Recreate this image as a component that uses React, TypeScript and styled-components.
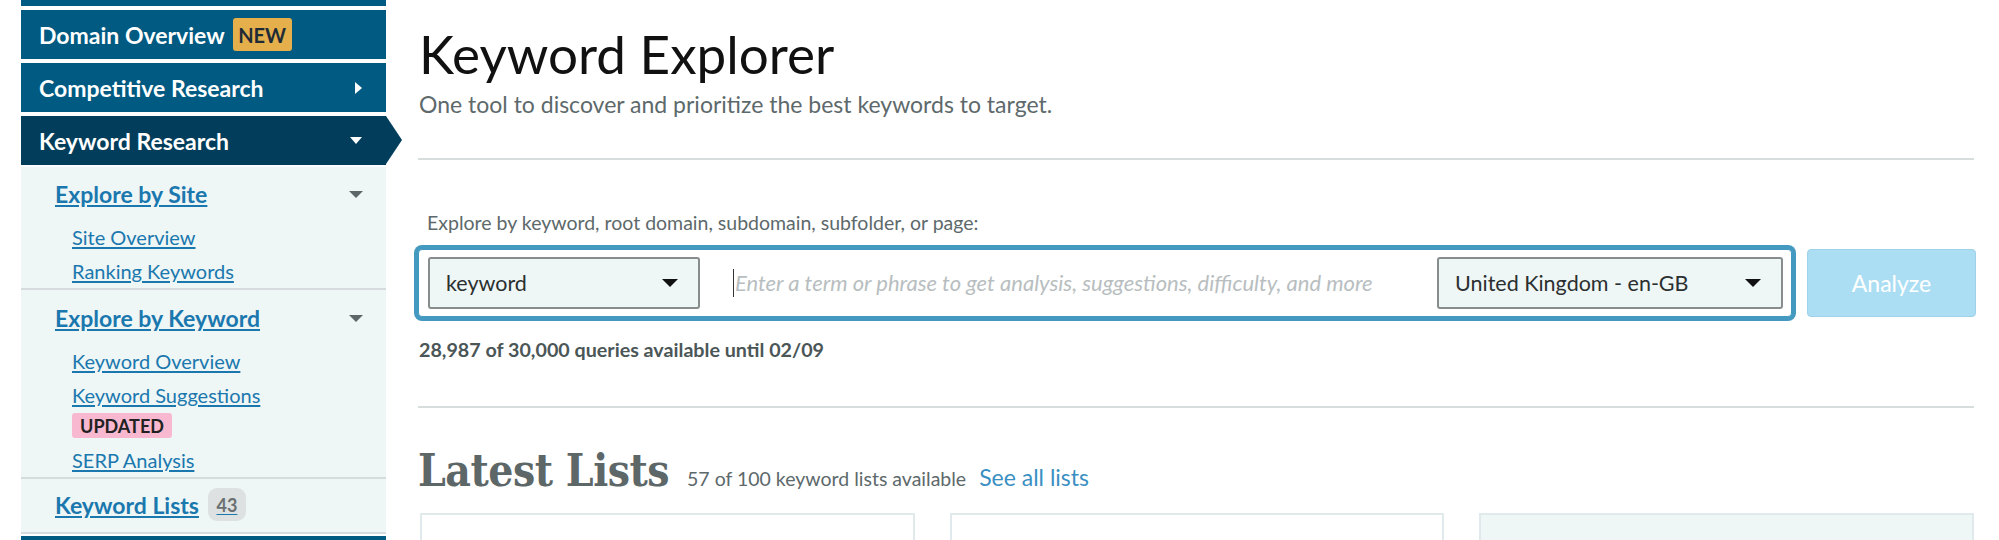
import styled, { createGlobalStyle, css } from "styled-components";

const GlobalStyle = createGlobalStyle`
  html, body {
    margin: 0;
    padding: 0;
    background: #ffffff;
  }
  body {
    font-family: Lato, "Open Sans", sans-serif;
    -webkit-font-smoothing: antialiased;
  }
  #root {
    height: 540px;
    overflow: hidden;
  }
`;

const Page = styled.div`
  display: flex;
  align-items: flex-start;
  gap: 32px;
  padding: 0 23px 0 21px;
`;

/* ---------- sidebar ---------- */

const Sidebar = styled.nav`
  width: 365px;
  flex-shrink: 0;
  display: flex;
  flex-direction: column;
`;

const NavItem = styled.div<{ $active?: boolean; $stub?: boolean }>`
  position: relative;
  box-sizing: border-box;
  height: ${(p) => (p.$stub ? "6px" : "49px")};
  margin-bottom: 4px;
  padding: 0 24px 0 18px;
  display: flex;
  align-items: center;
  justify-content: space-between;
  background: ${(p) => (p.$active ? "#023e5b" : "#005a81")};
  color: #ffffff;
  font-size: 23px;
  font-weight: 700;

  ${(p) =>
    p.$active &&
    css`
      margin-bottom: 2px;
      &::after {
        content: "";
        position: absolute;
        top: 0;
        right: -16px;
        border-left: 16px solid #023e5b;
        border-top: 24.5px solid transparent;
        border-bottom: 24.5px solid transparent;
      }
    `}
`;

const NavLabel = styled.span`
  display: flex;
  align-items: center;
  gap: 8px;
`;

const Caret = styled.span<{ $dir: "right" | "down"; $color: string; $size?: number }>`
  width: 0;
  height: 0;
  flex-shrink: 0;
  ${(p) =>
    p.$dir === "right"
      ? css`
          border-left: 7px solid ${p.$color};
          border-top: 6px solid transparent;
          border-bottom: 6px solid transparent;
        `
      : css`
          border-top: ${(p.$size ?? 14) * 0.55}px solid ${p.$color};
          border-left: ${(p.$size ?? 14) / 2}px solid transparent;
          border-right: ${(p.$size ?? 14) / 2}px solid transparent;
        `}
`;

const Badge = styled.span<{ $tone: "new" | "updated" | "count" }>`
  display: inline-flex;
  align-items: center;
  justify-content: center;
  box-sizing: border-box;
  font-weight: 700;
  ${(p) =>
    p.$tone === "new" &&
    css`
      height: 33px;
      width: 59px;
      background: #e5b04b;
      color: #1f2c37;
      font-size: 20px;
      border-radius: 3px;
    `}
  ${(p) =>
    p.$tone === "updated" &&
    css`
      height: 25px;
      width: 100px;
      background: #f8b9d0;
      color: #222222;
      font-size: 18px;
      border-radius: 3px;
    `}
  ${(p) =>
    p.$tone === "count" &&
    css`
      height: 33px;
      width: 38px;
      background: #dde1e1;
      color: #6a7071;
      font-size: 18px;
      border-radius: 9px;
      text-decoration: none;
    `}
`;

const SubPanel = styled.div`
  background: #eef6f6;
  margin-bottom: 2px;
`;

const Group = styled.div<{ $pad?: string }>`
  padding: ${(p) => p.$pad ?? "13px 23px 0 34px"};
  border-bottom: 2px solid #d6dcdd;
`;

const GroupHead = styled.div`
  display: flex;
  align-items: center;
  justify-content: space-between;
  height: 28px;
`;

const GroupLink = styled.a`
  display: inline-flex;
  align-items: center;
  gap: 9px;
  color: #1a78ae;
  font-size: 23px;
  font-weight: 700;
  text-decoration: underline;
  text-underline-offset: 2px;
`;

const SubList = styled.div`
  display: flex;
  flex-direction: column;
  align-items: flex-start;
  margin-top: 12px;
  padding-left: 17px;
`;

const SubLink = styled.a`
  display: block;
  height: 34px;
  line-height: 34px;
  color: #1a78ae;
  font-size: 20px;
  text-decoration: underline;
  text-underline-offset: 2px;
`;

const BadgeSlot = styled.div`
  margin: 1px 0 5px;
`;

/* ---------- main ---------- */

const Main = styled.main`
  flex: 1;
  min-width: 0;
  display: flex;
  flex-direction: column;
`;

const Title = styled.h1`
  margin: 22px 0 0;
  font-size: 53px;
  font-weight: 400;
  line-height: 1.2;
  color: #111111;
  padding-left: 1px;
`;

const Subtitle = styled.p`
  margin: 5px 0 0;
  font-size: 23px;
  line-height: 1.2;
  color: #5d696b;
  padding-left: 1px;
`;

const Rule = styled.hr<{ $top: number }>`
  margin: ${(p) => p.$top}px 2px 0 0;
  border: none;
  border-top: 2px solid #d7dcdd;
`;

const FieldLabel = styled.label`
  margin: 51px 0 0 9px;
  font-size: 19.5px;
  line-height: 1.2;
  color: #5d696b;
`;

const SearchRow = styled.div`
  display: flex;
  align-items: center;
  gap: 15px;
  margin-top: 14px;
`;

const SearchBox = styled.div`
  flex: 1;
  box-sizing: border-box;
  height: 68px;
  display: flex;
  align-items: center;
  padding: 0 8px 0 9px;
  border: 1px solid #4399c0;
  border-radius: 4px;
  box-shadow: 0 0 0 4px #4399c0;
  background: #ffffff;
`;

const Select = styled.div<{ $width: number }>`
  box-sizing: border-box;
  width: ${(p) => p.$width}px;
  height: 52px;
  flex-shrink: 0;
  display: flex;
  align-items: center;
  justify-content: space-between;
  padding: 0 20px 0 16px;
  background: #eef6f6;
  border: 2px solid #878c8d;
  border-radius: 3px;
  color: #2b2f30;
  font-size: 21.5px;
`;

const InputWrap = styled.div`
  flex: 1;
  display: flex;
  align-items: center;
  padding-left: 33px;
`;

const Cursor = styled.span`
  width: 1px;
  height: 28px;
  background: #333333;
`;

const QueryInput = styled.input`
  flex: 1;
  border: none;
  outline: none;
  background: transparent;
  padding: 0 0 0 1px;
  font-family: Lato, sans-serif;
  font-size: 22px;
  font-style: italic;
  color: #333333;
  &::placeholder {
    color: #b8bec0;
    font-style: italic;
  }
`;

const AnalyzeButton = styled.button`
  box-sizing: border-box;
  width: 169px;
  height: 68px;
  flex-shrink: 0;
  background: #acdef3;
  border: 1px solid #9ed1ea;
  border-radius: 4px;
  color: #ffffff;
  font-family: Lato, sans-serif;
  font-size: 23px;
`;

const Quota = styled.div`
  margin: 21px 0 0 1px;
  font-size: 19.7px;
  font-weight: 700;
  line-height: 1.2;
  color: #4b5657;
`;

const ListsHeader = styled.div`
  display: flex;
  align-items: baseline;
  margin-top: 37px;
`;

const ListsTitle = styled.h2`
  margin: 0 18px 0 0;
  font-family: "DejaVu Serif Condensed", "DejaVu Serif", serif;
  font-stretch: condensed;
  font-size: 44px;
  font-weight: 700;
  letter-spacing: -0.5px;
  line-height: 1.2;
  color: #5d6768;
`;

const ListsMeta = styled.span`
  font-size: 19.5px;
  color: #5d696b;
  margin-right: 13px;
`;

const ListsLink = styled.a`
  font-size: 23px;
  color: #3a8fc2;
  text-decoration: none;
`;

const CardGrid = styled.div`
  display: grid;
  grid-template-columns: repeat(3, 1fr);
  gap: 35px;
  margin: 15px 2px 0 2px;
`;

const Card = styled.div<{ $tinted?: boolean }>`
  height: 90px;
  border: 2px solid #e0eaec;
  background: ${(p) => (p.$tinted ? "#eef6f6" : "#ffffff")};
`;

const App = () => {
  return (
    <>
      <GlobalStyle />
      <Page>
        <Sidebar>
          <NavItem $stub />
          <NavItem>
            <NavLabel>
              Domain Overview <Badge $tone="new">NEW</Badge>
            </NavLabel>
          </NavItem>
          <NavItem>
            <NavLabel>Competitive Research</NavLabel>
            <Caret $dir="right" $color="#ffffff" />
          </NavItem>
          <NavItem $active>
            <NavLabel>Keyword Research</NavLabel>
            <Caret $dir="down" $color="#ffffff" $size={13} />
          </NavItem>

          <SubPanel>
            <Group>
              <GroupHead>
                <GroupLink href="#">Explore by Site</GroupLink>
                <Caret $dir="down" $color="#5d6768" />
              </GroupHead>
              <SubList>
                <SubLink href="#">Site Overview</SubLink>
                <SubLink href="#">Ranking Keywords</SubLink>
              </SubList>
            </Group>
            <Group $pad="14px 23px 0 34px">
              <GroupHead>
                <GroupLink href="#">Explore by Keyword</GroupLink>
                <Caret $dir="down" $color="#5d6768" />
              </GroupHead>
              <SubList>
                <SubLink href="#">Keyword Overview</SubLink>
                <SubLink href="#">Keyword Suggestions</SubLink>
                <BadgeSlot>
                  <Badge $tone="updated">UPDATED</Badge>
                </BadgeSlot>
                <SubLink href="#">SERP Analysis</SubLink>
              </SubList>
            </Group>
            <Group $pad="9px 23px 11px 34px">
              <GroupLink href="#">
                Keyword Lists <Badge $tone="count">43</Badge>
              </GroupLink>
            </Group>
          </SubPanel>
          <NavItem />
        </Sidebar>

        <Main>
          <Title>Keyword Explorer</Title>
          <Subtitle>One tool to discover and prioritize the best keywords to target.</Subtitle>
          <Rule $top={40} />

          <FieldLabel htmlFor="kw-query">
            Explore by keyword, root domain, subdomain, subfolder, or page:
          </FieldLabel>
          <SearchRow>
            <SearchBox>
              <Select $width={272}>
                keyword
                <Caret $dir="down" $color="#111111" $size={16} />
              </Select>
              <InputWrap>
                <Cursor />
                <QueryInput
                  id="kw-query"
                  placeholder="Enter a term or phrase to get analysis, suggestions, difficulty, and more"
                />
              </InputWrap>
              <Select $width={346}>
                United Kingdom - en-GB
                <Caret $dir="down" $color="#111111" $size={16} />
              </Select>
            </SearchBox>
            <AnalyzeButton>Analyze</AnalyzeButton>
          </SearchRow>
          <Quota>28,987 of 30,000 queries available until 02/09</Quota>
          <Rule $top={45} />

          <ListsHeader>
            <ListsTitle>Latest Lists</ListsTitle>
            <ListsMeta>57 of 100 keyword lists available</ListsMeta>
            <ListsLink href="#">See all lists</ListsLink>
          </ListsHeader>
          <CardGrid>
            <Card />
            <Card />
            <Card $tinted />
          </CardGrid>
        </Main>
      </Page>
    </>
  );
};

export default App;
